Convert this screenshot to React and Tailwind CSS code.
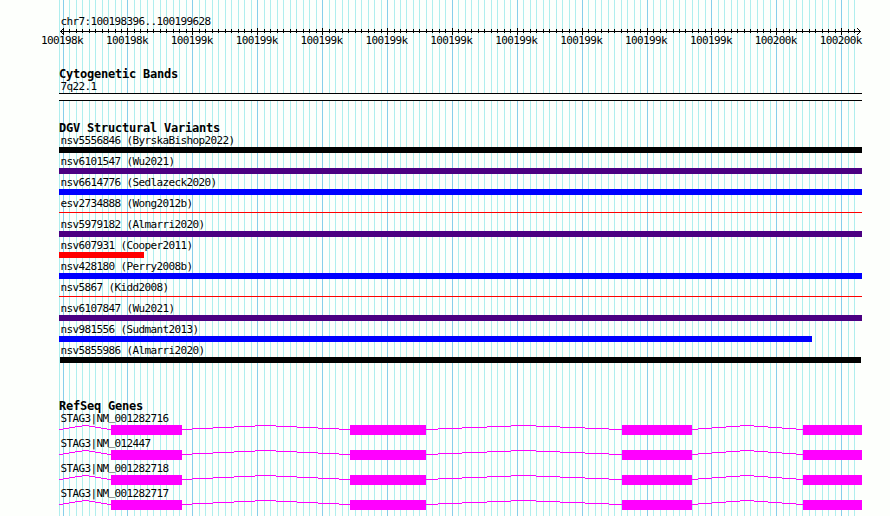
const LEFT = 59;
const RIGHT = 862;

const MONO = "font-['DejaVu_Sans_Mono',monospace]";
const LABEL = `${MONO} text-[11px] leading-[12px] tracking-[-0.62px] whitespace-pre`;
const TITLE = `${MONO} text-[12px] leading-[12px] font-bold tracking-[-0.22px] whitespace-pre mb-px`;

// one minor tick every ~6.49px, a major one on every tenth
const TICKS = Array.from({ length: 123 }, (_, n) => ({
  x: Math.floor(63.1 + n * 6.4885),
  major: n % 10 === 0,
}));

const AXIS_LABELS = [
  '100198k', '100198k', '100199k', '100199k', '100199k', '100199k', '100199k',
  '100199k', '100199k', '100199k', '100199k', '100200k', '100200k',
];

const VARIANTS = [
  { name: 'nsv5556846 (ByrskaBishop2022)', bar: 'h-[6px] w-[803px] bg-black' },
  { name: 'nsv6101547 (Wu2021)', bar: 'h-[6px] w-[803px] bg-[#4b0082]' },
  { name: 'nsv6614776 (Sedlazeck2020)', bar: 'h-[6px] w-[803px] bg-[#0000ff]' },
  { name: 'esv2734888 (Wong2012b)', bar: 'mt-[2px] h-px w-[803px] bg-[#ff0000]' },
  { name: 'nsv5979182 (Almarri2020)', bar: 'h-[6px] w-[803px] bg-[#4b0082]' },
  { name: 'nsv607931 (Cooper2011)', bar: 'h-[6px] w-[85px] bg-[#ff0000]' },
  { name: 'nsv428180 (Perry2008b)', bar: 'h-[6px] w-[803px] bg-[#0000ff]' },
  { name: 'nsv5867 (Kidd2008)', bar: 'mt-[2px] h-px w-[803px] bg-[#ff0000]' },
  { name: 'nsv6107847 (Wu2021)', bar: 'h-[6px] w-[803px] bg-[#4b0082]' },
  { name: 'nsv981556 (Sudmant2013)', bar: 'h-[6px] w-[753px] bg-[#0000ff]' },
  { name: 'nsv5855986 (Almarri2020)', bar: 'ml-px h-[6px] w-[801px] bg-black' },
];

const GENES = [
  'STAG3|NM_001282716',
  'STAG3|NM_012447',
  'STAG3|NM_001282718',
  'STAG3|NM_001282717',
];

const EXONS = [[111, 182], [350, 426], [622, 692], [803, 862]];

// introns as flat runs: [x1, x2, height above the baseline]
const INTRONS = [
  [59, 63, 0], [63, 69, 1], [69, 75, 2], [75, 82, 3], [82, 89, 4], [89, 95, 3], [95, 101, 2], [101, 107, 1], [107, 111, 0],
  [182, 192, 0], [192, 213, 1], [213, 234, 2], [234, 255, 3], [255, 276, 4], [276, 297, 3], [297, 318, 2], [318, 339, 1], [339, 350, 0],
  [426, 438, 0], [438, 462, 1], [462, 487, 2], [487, 511, 3], [511, 536, 4], [536, 560, 3], [560, 585, 2], [585, 609, 1], [609, 622, 0],
  [692, 698, 0], [698, 712, 1], [712, 726, 2], [726, 740, 3], [740, 754, 4], [754, 768, 3], [768, 782, 2], [782, 796, 1], [796, 803, 0],
];

function Grid() {
  return (
    <svg className="absolute inset-0" width="890" height="516" shapeRendering="crispEdges">
      <rect x={LEFT} y="0" width="1" height="516" fill="#afeeee" />
      {TICKS.map(({ x, major }) => (
        <rect key={x} x={x} y="0" width="1" height="516" fill={major ? '#87ceeb' : '#afeeee'} />
      ))}
    </svg>
  );
}

function Ruler() {
  return (
    <svg className="block" width="890" height="8" shapeRendering="crispEdges">
      <rect x="60" y="3" width="801" height="1" />
      {TICKS.map(({ x, major }) => (
        <rect key={x} x={x} y={major ? 0 : 1} width="1" height={major ? 7 : 4} />
      ))}
      <path d="M61 2h1v1h-1zM62 1h1v1h-1zM63 0h1v1h-1zM61 4h1v1h-1zM62 5h1v1h-1zM63 6h1v1h-1z" />
      <path d="M859 2h1v1h-1zM858 1h1v1h-1zM857 0h1v1h-1zM859 4h1v1h-1zM858 5h1v1h-1zM857 6h1v1h-1z" />
    </svg>
  );
}

function Gene({ name }) {
  const [head, tail] = name.split('_');
  return (
    <div className="h-[25px]">
      {/* the underscore is raised so that the first exon doesn't cover it */}
      <div className={`${LABEL} h-[12px] pl-[1.5px]`}>
        {head}<span className="relative -top-[2px]">_</span>{tail}
      </div>
      <svg className="block" width="803" height="13" viewBox="59 0 803 13" shapeRendering="crispEdges" fill="#ff00ff">
        {INTRONS.map(([x1, x2, up]) => (
          <rect key={x1} x={x1} y={4 - up} width={x2 - x1} height="1" />
        ))}
        {EXONS.map(([x1, x2]) => (
          <rect key={x1} x={x1} y="0" width={x2 - x1} height="10" />
        ))}
      </svg>
    </div>
  );
}

export default function App() {
  return (
    <div className="relative h-[516px] w-[890px] overflow-hidden bg-[#fdfffc] text-black">
      <Grid />
      <div className="relative pt-[16px]">
        <div className={`${LABEL} ml-[59px] pl-[1.5px]`}>chr7:100198396..100199628</div>
        <Ruler />
        <div className="-mt-px ml-[41px] flex">
          {AXIS_LABELS.map((label, i) => (
            <div key={i} className={`${LABEL} w-[64.9px] shrink-0`}>{label}</div>
          ))}
        </div>

        <div className="ml-[59px]" style={{ width: RIGHT - LEFT }}>
          <div className={`${TITLE} mt-[21px]`}>Cytogenetic Bands</div>
          <div className={`${LABEL} pl-[1.5px]`}>7q22.1</div>
          <div className="h-[8px] border-y border-black bg-[#fdfffc]" />

          <div className={`${TITLE} mt-[21px]`}>DGV Structural Variants</div>
          {VARIANTS.map(({ name, bar }) => (
            <div key={name} className="flex h-[21px] flex-col">
              <div className={`${LABEL} pl-[1.5px]`}>{name}</div>
              <div className={`${bar} shrink-0`} />
            </div>
          ))}

          <div className={`${TITLE} mt-[34px]`}>RefSeq Genes</div>
          {GENES.map((name) => <Gene key={name} name={name} />)}
        </div>
      </div>
    </div>
  );
}
